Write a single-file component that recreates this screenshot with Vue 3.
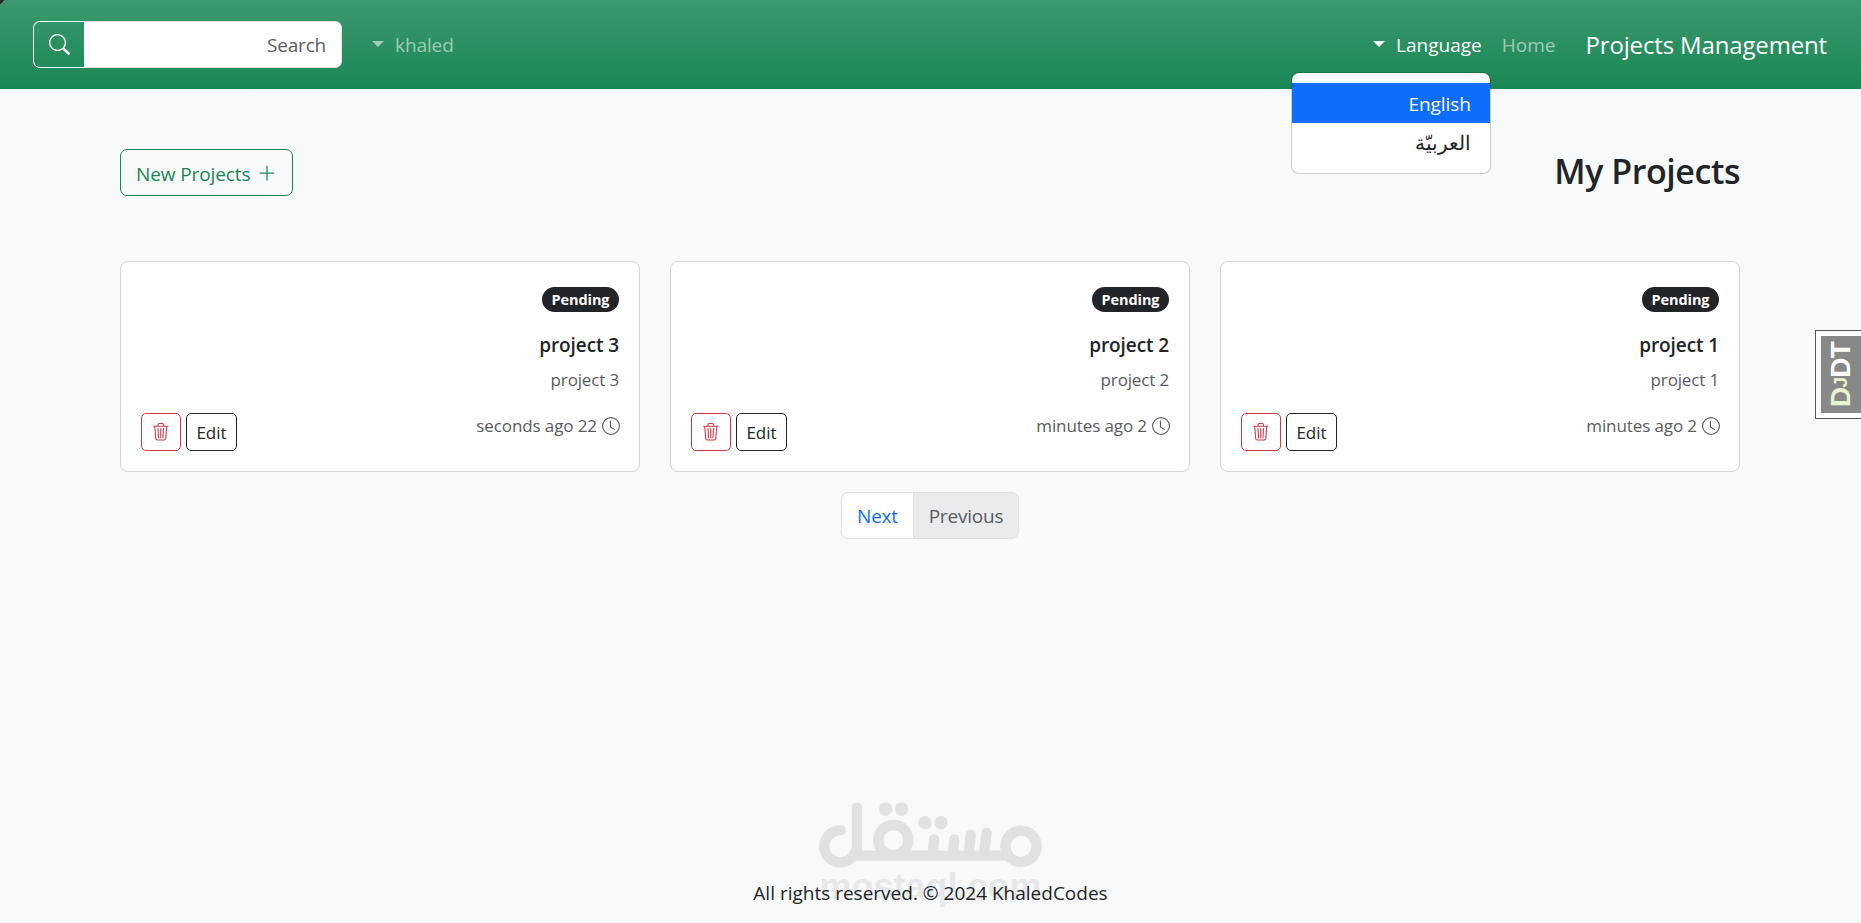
<template>
  <div class="page">
    <nav class="navbar">
      <span class="corner"></span>
      <form class="search" @submit.prevent>
        <button class="search-btn" type="submit" aria-label="Search">
          <svg width="21" height="21" viewBox="0 0 16 16" fill="currentColor">
            <path d="M11.742 10.344a6.5 6.5 0 1 0-1.397 1.398h-.001c.03.04.062.078.098.115l3.85 3.85a1 1 0 0 0 1.415-1.414l-3.85-3.85a1.007 1.007 0 0 0-.115-.1zM12 6.5a5.5 5.5 0 1 1-11 0 5.5 5.5 0 0 1 11 0z" />
          </svg>
        </button>
        <input v-model="query" class="search-input" type="text" placeholder="Search">
      </form>
      <a class="nav-link user"><span class="caret"></span>khaled</a>

      <div class="nav-right">
        <div class="dropdown">
          <a class="nav-link active" @click="menuOpen = !menuOpen"><span class="caret"></span>Language</a>
          <div v-if="menuOpen" class="dropdown-menu">
            <a class="dropdown-item selected">English</a>
            <a class="dropdown-item arabic" dir="rtl">العربيّة</a>
          </div>
        </div>
        <a class="nav-link home">Home</a>
        <a class="brand">Projects Management</a>
      </div>
    </nav>

    <main class="container">
      <header class="heading">
        <button class="btn-new">
          <span>New Projects</span>
          <svg width="20" height="20" viewBox="0 0 16 16" fill="currentColor">
            <path d="M8 2a.5.5 0 0 1 .5.5v5h5a.5.5 0 0 1 0 1h-5v5a.5.5 0 0 1-1 0v-5h-5a.5.5 0 0 1 0-1h5v-5A.5.5 0 0 1 8 2" />
          </svg>
        </button>
        <h2>My Projects</h2>
      </header>

      <section class="cards">
        <article v-for="project in projects" :key="project.title" class="card">
          <span class="badge">Pending</span>
          <h5>{{ project.title }}</h5>
          <p class="desc">{{ project.description }}</p>
          <footer class="card-footer">
            <div class="actions">
              <button class="btn-sm danger" aria-label="Delete">
                <svg width="17.5" height="17.5" viewBox="0 0 16 16" fill="currentColor">
                  <path d="M6.5 1h3a.5.5 0 0 1 .5.5v1H6v-1a.5.5 0 0 1 .5-.5M11 2.5v-1A1.5 1.5 0 0 0 9.5 0h-3A1.5 1.5 0 0 0 5 1.5v1H1.5a.5.5 0 0 0 0 1h.538l.853 10.66A2 2 0 0 0 4.885 16h6.23a2 2 0 0 0 1.994-1.84l.853-10.66h.538a.5.5 0 0 0 0-1zm1.958 1-.846 10.58a1 1 0 0 1-.997.92h-6.23a1 1 0 0 1-.997-.92L3.042 3.5zm-7.487 1a.5.5 0 0 1 .528.47l.5 8.5a.5.5 0 0 1-.998.06L5 5.03a.5.5 0 0 1 .47-.53Zm5.058 0a.5.5 0 0 1 .47.53l-.5 8.5a.5.5 0 1 1-.998-.06l.5-8.5a.5.5 0 0 1 .528-.47M8 4.5a.5.5 0 0 1 .5.5v8.5a.5.5 0 0 1-1 0V5a.5.5 0 0 1 .5-.5" />
                </svg>
              </button>
              <button class="btn-sm edit">Edit</button>
            </div>
            <div class="time">
              <span>{{ project.time }}</span>
              <svg width="18" height="18" viewBox="0 0 16 16" fill="currentColor">
                <path d="M8 3.5a.5.5 0 0 0-1 0V9a.5.5 0 0 0 .252.434l3.5 2a.5.5 0 0 0 .496-.868L8 8.71z" />
                <path d="M8 16A8 8 0 1 0 8 0a8 8 0 0 0 0 16m7-8A7 7 0 1 1 1 8a7 7 0 0 1 14 0" />
              </svg>
            </div>
          </footer>
        </article>
      </section>

      <div class="pagination">
        <a class="page-link next">Next</a>
        <a class="page-link disabled">Previous</a>
      </div>
    </main>

    <footer class="site-footer">All rights reserved. © 2024 KhaledCodes</footer>

    <div class="watermark">
      <svg width="226.67" height="70" viewBox="230 60 680 210" fill="none" stroke="#000" stroke-width="31" stroke-linecap="round">
        <path d="M350 82V227M301 151A48 48 0 1 0 345 215M340 227H800" />
        <circle cx="842" cy="199" r="47" />
        <circle cx="459" cy="180" r="45" />
        <path d="M577 227L581 178M637 227L642 178M684 227L691 165M730 227L739 158" />
        <g fill="#000" stroke="none">
          <circle cx="436" cy="87" r="20" />
          <circle cx="484" cy="87" r="20" />
          <circle cx="554" cy="128" r="20" />
          <circle cx="602" cy="128" r="20" />
        </g>
      </svg>
      <span>mostaql.com</span>
    </div>

    <div class="debug-handle">
      <div class="debug-inner">
        <span class="debug-text"><b>D<small>J</small></b>DT</span>
      </div>
    </div>
  </div>
</template>

<script setup>
import { ref } from 'vue';

const query = ref('');
const menuOpen = ref(true);

const projects = [
  { title: 'project 3', description: 'project 3', time: 'seconds ago 22' },
  { title: 'project 2', description: 'project 2', time: 'minutes ago 2' },
  { title: 'project 1', description: 'project 1', time: 'minutes ago 2' }
];
</script>

<style>
body {
  margin: 0;
  overflow: hidden;
}
</style>

<style scoped>
* {
  box-sizing: border-box;
}

.page {
  position: relative;
  height: 923px;
  display: flex;
  flex-direction: column;
  background: #f8f9fb;
  color: #212529;
  font-family: 'Open Sans', 'Noto Sans', sans-serif;
  font-size: 19px;
  line-height: 30px;
}

button,
input {
  font: inherit;
  letter-spacing: inherit;
  margin: 0;
}

/* Navbar */
.navbar {
  position: relative;
  flex: none;
  display: flex;
  align-items: center;
  height: 89px;
  padding: 0 34px 0 33px;
  background: linear-gradient(#3c996e, #198754);
}

.corner {
  position: absolute;
  top: 0;
  left: 0;
  width: 4px;
  height: 4px;
  background: linear-gradient(135deg, #25292b 50%, transparent 50%);
}

.search {
  display: flex;
  width: 309px;
  height: 47px;
}

.search-btn {
  width: 51px;
  padding: 0;
  display: flex;
  align-items: center;
  justify-content: center;
  color: #fff;
  background: transparent;
  border: 1px solid #f8f9fa;
  border-right: 0;
  border-radius: 7px 0 0 7px;
}

.search-input {
  flex: 1;
  min-width: 0;
  padding: 0 15px 0 0;
  text-align: right;
  letter-spacing: -0.2px;
  background: #fff;
  border: 1px solid #dee2e6;
  border-left: 0;
  border-radius: 0 7px 7px 0;
  outline: none;
}

.search-input::placeholder {
  color: #595c5f;
  opacity: 1;
}

.nav-link {
  display: flex;
  align-items: center;
  color: rgba(255, 255, 255, 0.55);
}

.nav-link.active {
  color: #fff;
}

.user {
  margin-left: 30px;
  letter-spacing: -0.1px;
}

.caret {
  margin: 0 11px 2px 0;
  border: 6px solid transparent;
  border-top-color: currentColor;
  border-bottom: 0;
}

.nav-right {
  display: flex;
  align-items: center;
  margin-left: auto;
}

.home {
  margin: 0 30px 0 20px;
}

.brand {
  color: #fff;
  font-size: 24px;
  letter-spacing: -0.15px;
}

.dropdown {
  position: relative;
}

.dropdown-menu {
  position: absolute;
  z-index: 5;
  top: 42px;
  right: -9px;
  width: 200px;
  height: 102px;
  padding: 10px 0 9px;
  background: #fff;
  background-clip: padding-box;
  border: 1px solid rgba(0, 0, 0, 0.175);
  border-radius: 8px;
}

.dropdown-item {
  display: block;
  height: 40px;
  padding: 6px 19px 4px;
  text-align: right;
  letter-spacing: -0.1px;
}

.dropdown-item.selected {
  color: #fff;
  background: #0d6efd;
}

.dropdown-item.arabic {
  padding-top: 5px;
  text-align: start;
  font-size: 19.5px;
  letter-spacing: 0;
}

/* Content */
.container {
  width: 1620px;
  margin: 0 121px 0 120px;
  padding-top: 60px;
}

.heading {
  display: flex;
  justify-content: space-between;
  height: 112px;
}

.btn-new {
  display: flex;
  align-items: center;
  justify-content: space-between;
  width: 173px;
  height: 47px;
  padding: 2px 15px 0;
  color: #198754;
  background: transparent;
  border: 1px solid #198754;
  border-radius: 7px;
  letter-spacing: -0.1px;
}

.btn-new svg {
  margin-bottom: 2px;
}

h2 {
  margin: -1px 0 0;
  font-size: 34px;
  font-weight: 600;
  line-height: 47px;
  letter-spacing: -0.45px;
}

.cards {
  display: grid;
  grid-template-columns: repeat(3, 520px);
  gap: 30px;
}

.card {
  display: flex;
  flex-direction: column;
  align-items: flex-end;
  height: 211px;
  padding: 25px 20px 20px;
  background: #fff;
  border: 1px solid #d3d5d7;
  border-radius: 8px;
}

.badge {
  width: 77px;
  height: 25px;
  color: #fff;
  background: #212529;
  border-radius: 13px;
  font-size: 14.5px;
  font-weight: 700;
  line-height: 25px;
  letter-spacing: -0.1px;
  text-align: center;
}

h5 {
  margin: 19px 0 0;
  font-size: 19px;
  font-weight: 600;
  line-height: 28px;
  letter-spacing: -0.1px;
}

.desc {
  margin: 8px 0 0;
  color: #595c5f;
  font-size: 17px;
  line-height: 26px;
  letter-spacing: -0.15px;
}

.card-footer {
  display: flex;
  justify-content: space-between;
  width: 100%;
  margin-top: 20px;
}

.actions {
  display: flex;
  gap: 5px;
}

.btn-sm {
  display: flex;
  align-items: center;
  justify-content: center;
  height: 38px;
  padding: 0;
  background: transparent;
  border: 1px solid #212529;
  border-radius: 5px;
  color: #212529;
  font-size: 17px;
}

.danger {
  width: 40px;
  color: #dc3545;
  border-color: #dc3545;
}

.edit {
  width: 51px;
  padding-top: 2px;
}

.time {
  display: flex;
  align-items: center;
  gap: 5px;
  height: 26px;
  margin-right: -1px;
  color: #595c5f;
  font-size: 17px;
  letter-spacing: -0.1px;
}

.pagination {
  display: flex;
  justify-content: center;
  margin-top: 20px;
}

.page-link {
  height: 47px;
  line-height: 46px;
  text-align: center;
  letter-spacing: -0.2px;
  border: 1px solid #dee2e6;
}

.next {
  width: 72px;
  color: #0d6efd;
  background: #fff;
  border-right: 0;
  border-radius: 7px 0 0 7px;
}

.disabled {
  width: 106px;
  color: #595c5f;
  background: #e9ebee;
  border-radius: 0 7px 7px 0;
}

.site-footer {
  margin-top: auto;
  padding-bottom: 15px;
  text-align: center;
}

/* Overlays */
.watermark {
  position: absolute;
  left: 817px;
  top: 800px;
  width: 227px;
  opacity: 0.09;
  color: #000;
  pointer-events: none;
}

.watermark svg {
  display: block;
}

.watermark span {
  display: block;
  font: 700 36px/40px 'Liberation Sans', sans-serif;
  letter-spacing: 0;
  text-align: center;
  margin-top: -3px;
  opacity: 0.75;
}

.debug-handle {
  position: absolute;
  top: 330px;
  right: 0;
  width: 46px;
  height: 89px;
  padding: 5px 0 5px 5px;
  background: #fff;
  border: 1px solid #555;
  border-right: 0;
}

.debug-inner {
  display: flex;
  align-items: center;
  justify-content: center;
  height: 100%;
  background: #888;
}

.debug-text {
  color: #fff;
  font: 700 28px/30px 'Liberation Sans', sans-serif;
  letter-spacing: -0.8px;
  writing-mode: vertical-rl;
  transform: rotate(180deg);
}

.debug-text b {
  color: #e4f7cd;
}

.debug-text small {
  font-size: 19px;
}
</style>
